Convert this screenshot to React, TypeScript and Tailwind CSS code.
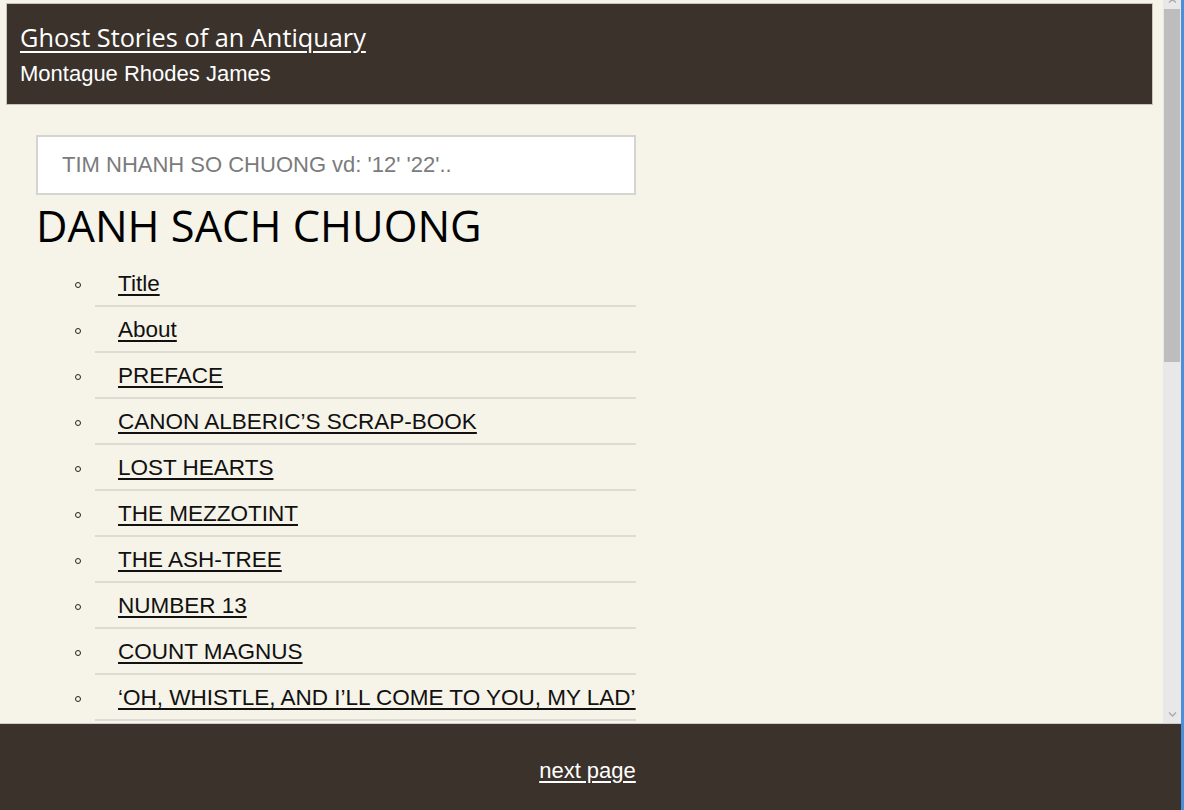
import React from "react";

const chapters = [
  "Title",
  "About",
  "PREFACE",
  "CANON ALBERIC’S SCRAP-BOOK",
  "LOST HEARTS",
  "THE MEZZOTINT",
  "THE ASH-TREE",
  "NUMBER 13",
  "COUNT MAGNUS",
  "‘OH, WHISTLE, AND I’LL COME TO YOU, MY LAD’",
];

const sans = "font-['Liberation_Sans',Arial,sans-serif]";
const ui = "font-['Open_Sans','Noto_Sans',sans-serif]";

function Scrollbar() {
  return (
    <div className="w-[18px] h-full bg-[#e8e8e8] flex flex-col items-center">
      <div className="h-[9px] w-full flex items-start justify-center">
        <svg width="9" height="4" viewBox="0 0 9 4" className="mt-[-1px]">
          <path d="M1 3.5 L4.5 0.5 L8 3.5" fill="none" stroke="#a8a8a8" strokeWidth="1.3" />
        </svg>
      </div>
      <div className="w-[16px] h-[353px] bg-[#bdbdbd]" />
      <div className="flex-1" />
      <div className="h-[18px] w-full flex items-center justify-center">
        <svg width="9" height="5" viewBox="0 0 9 5">
          <path d="M1 0.5 L4.5 4 L8 0.5" fill="none" stroke="#a8a8a8" strokeWidth="1.3" />
        </svg>
      </div>
    </div>
  );
}

export default function App() {
  return (
    <div className="w-[1184px] h-[810px] overflow-hidden flex bg-white">
      <div className="w-[1181px] h-full flex flex-col">
        <div className="h-[723px] flex">
          <div className="w-[1163px] h-full overflow-hidden bg-[#f6f3e9]">
            {/* Header */}
            <header className="mt-[3px] ml-[6px] w-[1147px] h-[102px] bg-[#3b322c] border border-[#c9c5bc] pl-[13px] pt-[16px]">
              <a href="#" className={`${ui} block w-fit text-[25.3px] leading-[34px] text-white underline underline-offset-[4px] decoration-[1.5px]`}>
                Ghost Stories of an Antiquary
              </a>
              <div className={`${sans} text-[22px] leading-[28px] text-white mt-[6px]`}>Montague Rhodes James</div>
            </header>

            <main className="pl-[36px] pt-[30px]">
              <input
                type="text"
                placeholder="TIM NHANH SO CHUONG vd: '12' '22'.."
                className={`${sans} w-[600px] h-[60px] bg-white border-2 border-[#d4d4d4] pl-[24px] text-[22px] text-[#333] placeholder:text-[#7b7b7b] outline-none`}
              />
              <h1 className={`${ui} text-[43.4px] leading-[60px] text-black mt-[1px]`}>DANH SACH CHUONG</h1>

              <ul className="ml-[59px] w-[541px] mt-[5px]">
                {chapters.map((c) => (
                  <li key={c} className="relative h-[46px] border-b-2 border-[#dedbd4] pl-[23px] flex items-center">
                    <span className="absolute left-[-20px] top-[21px] w-[6px] h-[6px] rounded-full border border-[#222]" />
                    <a href="#" className={`${sans} text-[22.5px] leading-[26px] text-[#111] underline underline-offset-[3px] decoration-[1.5px] whitespace-nowrap mt-[2px]`}>
                      {c}
                    </a>
                  </li>
                ))}
              </ul>
            </main>
          </div>
          <Scrollbar />
        </div>

        {/* Footer */}
        <footer className="h-[87px] bg-[#3b322c] border-t border-[#ccc] flex items-center justify-center pr-[6px]">
          <a href="#" className={`${sans} text-[22px] text-white underline underline-offset-[3px] decoration-[1.5px] mt-[6px]`}>
            next page
          </a>
        </footer>
      </div>
      <div className="w-[3px] h-full bg-[#4a8fdc]" />
    </div>
  );
}
